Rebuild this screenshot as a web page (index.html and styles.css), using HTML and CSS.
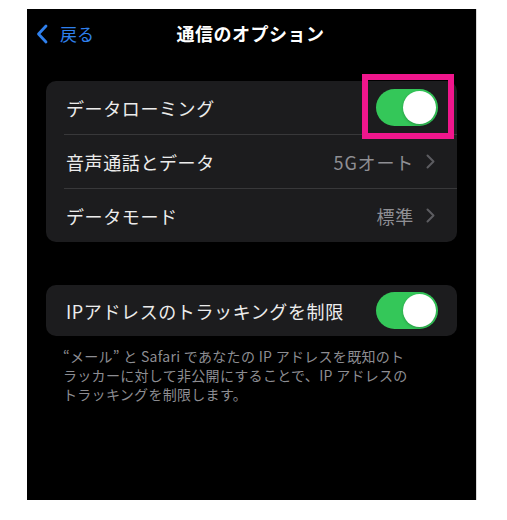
FILE: index.html
```html
<!DOCTYPE html>
<html lang="ja">
<head>
<meta charset="utf-8">
<link rel="stylesheet" href="styles.css">
</head>
<body>
<div class="screen">
  <div class="nav">
    <div class="back">
      <svg class="back-chev" width="12" height="20" viewBox="0 0 12 20"><path d="M10 2 L2.5 10 L10 18" fill="none" stroke="currentColor" stroke-width="2.8" stroke-linecap="round" stroke-linejoin="round"/></svg>
      <span class="back-label">戻る</span>
    </div>
    <div class="title">通信のオプション</div>
    <div></div>
  </div>

  <div class="card">
    <div class="row">
      <span class="label">データローミング</span>
      <span class="toggle-wrap">
        <span class="toggle"><span class="knob"></span></span>
        <span class="highlight"></span>
      </span>
    </div>
    <div class="sep"></div>
    <div class="row">
      <span class="label">音声通話とデータ</span>
      <span class="value">5Gオート<svg class="chev" width="9" height="15" viewBox="0 0 9 15"><path d="M1.5 1.5 L7.5 7.5 L1.5 13.5" fill="none" stroke="currentColor" stroke-width="2" stroke-linecap="round" stroke-linejoin="round"/></svg></span>
    </div>
    <div class="sep"></div>
    <div class="row">
      <span class="label">データモード</span>
      <span class="value">標準<svg class="chev" width="9" height="15" viewBox="0 0 9 15"><path d="M1.5 1.5 L7.5 7.5 L1.5 13.5" fill="none" stroke="currentColor" stroke-width="2" stroke-linecap="round" stroke-linejoin="round"/></svg></span>
    </div>
  </div>

  <div class="card card2">
    <div class="row row2">
      <span class="label">IPアドレスのトラッキングを制限</span>
      <span class="toggle"><span class="knob"></span></span>
    </div>
  </div>
  <p class="footer">“メール” と Safari であなたの IP アドレスを既知のト<br>ラッカーに対して非公開にすることで、IP アドレスの<br>トラッキングを制限します。</p>
</div>
</body>
</html>
```

FILE: styles.css
```css
html, body {
  margin: 0;
  padding: 0;
  background: #ffffff;
}
body {
  font-family: "Noto Sans CJK JP", "Noto Sans", sans-serif;
}
.screen {
  margin: 9px 0 0 27px;
  width: 449px;
  height: 491px;
  background: #000;
  border-right: 1px solid #d9d9d9;
  box-sizing: content-box;
  overflow: hidden;
  color: #fff;
}
.nav {
  height: 48px;
  display: grid;
  grid-template-columns: 1fr auto 1fr;
  align-items: center;
}
.back {
  display: flex;
  align-items: center;
  color: #2f80ed;
  padding-left: 9px;
  padding-top: 1px;
}
.back-chev {
  display: block;
}
.back-label {
  font-size: 17px;
  margin-left: 12px;
  line-height: 1;
}
.title {
  font-size: 18px;
  font-weight: 600;
  letter-spacing: 0.5px;
  margin-left: -2px;
}
.card {
  margin: 24px 19px 0;
  background: #1c1c1e;
  border-radius: 10px;
}
.row {
  height: 53px;
  display: flex;
  align-items: center;
  justify-content: space-between;
  padding: 0 19px 0 20px;
}
.label {
  font-size: 18px;
  letter-spacing: 0.6px;
  color: #ececec;
}
.sep {
  height: 1px;
  background: #38383a;
  margin-left: 18px;
}
.value {
  display: flex;
  align-items: center;
  font-size: 18px;
  letter-spacing: 0.8px;
  color: #8f8f94;
  margin-right: 3px;
}
.chev {
  color: #5c5c60;
  margin-left: 12px;
}
.toggle-wrap {
  position: relative;
  display: block;
}
.toggle {
  display: block;
  position: relative;
  width: 62px;
  height: 37px;
  border-radius: 19px;
  background: #34c759;
}
.knob {
  position: absolute;
  right: 2px;
  top: 2px;
  width: 33px;
  height: 33px;
  border-radius: 50%;
  background: #fff;
  box-shadow: 0 1px 3px rgba(0, 0, 0, 0.25);
}
.highlight {
  position: absolute;
  left: -14px;
  top: -15px;
  width: 92px;
  height: 65px;
  border: 6px solid #f0168c;
  box-sizing: border-box;
}
.card2 {
  margin-top: 43px;
}
.row2 {
  height: 51px;
}
.footer {
  margin: 11px 0 0 36px;
  font-size: 14px;
  line-height: 19px;
  letter-spacing: 0.3px;
  color: #8d8d92;
  white-space: nowrap;
}
```
